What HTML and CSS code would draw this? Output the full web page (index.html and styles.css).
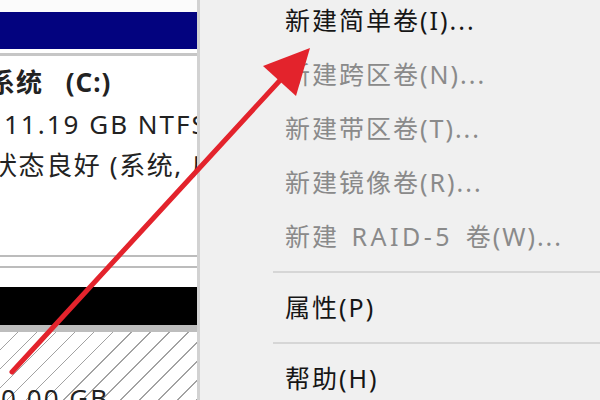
FILE: index.html
```html
<!DOCTYPE html>
<html lang="zh-CN">
<head>
<meta charset="utf-8">
<title>磁盘管理</title>
<link rel="stylesheet" href="styles.css">
</head>
<body>
<div class="screen">
  <div class="disk-panel">
    <div class="top-strip"></div>
    <div class="title-bar"></div>
    <div class="gap"></div>
    <div class="rule"></div>
    <div class="volume-info">
      <div class="vol-line vol-name">系统 (C:)</div>
      <div class="vol-line vol-size">11.19 GB NTFS</div>
      <div class="vol-line vol-state">状态良好 (系统, 启动)</div>
    </div>
    <div class="rule thin"></div>
    <div class="gap small"></div>
    <div class="rule thin"></div>
    <div class="gap mid"></div>
    <div class="black-bar"></div>
    <div class="gray-band"></div>
    <div class="hatch">
      <div class="hatch-text">0.00 GB</div>
    </div>
  </div>
  <div class="menu">
    <ul class="menu-list">
      <li class="item">新建简单卷(I)...</li>
      <li class="item disabled">新建跨区卷(N)...</li>
      <li class="item disabled">新建带区卷(T)...</li>
      <li class="item disabled">新建镜像卷(R)...</li>
      <li class="item disabled">新建 <span class="latin">RAID-5</span> 卷(W)...</li>
      <li class="sep"></li>
      <li class="item">属性(P)</li>
      <li class="sep"></li>
      <li class="item">帮助(H)</li>
    </ul>
  </div>
  <svg class="arrow" width="600" height="400" viewBox="0 0 600 400">
    <line x1="12" y1="372" x2="284" y2="76" stroke="#e3232c" stroke-width="5" stroke-linecap="round"/>
    <polygon points="310,48 263,66 296,96" fill="#e3232c"/>
  </svg>
</div>
</body>
</html>
```

FILE: styles.css
```css
html, body {
  margin: 0;
  padding: 0;
}
body {
  width: 600px;
  height: 400px;
  overflow: hidden;
  font-family: "Noto Sans", "Noto Sans CJK SC", sans-serif;
}
.screen {
  position: relative;
  width: 600px;
  height: 400px;
  display: flex;
  overflow: hidden;
  background: #f0f0f0;
}
.disk-panel {
  width: 197px;
  flex: none;
  background: #ffffff;
  border-right: 3px solid #d2d2d2;
  display: flex;
  flex-direction: column;
  overflow: hidden;
}
.disk-panel > div {
  flex-shrink: 0;
}
.top-strip {
  height: 12px;
  background: #fbfbfb;
}
.title-bar {
  height: 37px;
  background: #03037f;
}
.gap {
  height: 4px;
}
.gap.small {
  height: 9px;
}
.gap.mid {
  height: 19px;
}
.rule {
  height: 3px;
  background: #c6c6c6;
}
.rule.thin {
  height: 2px;
  background: #bcbcbc;
}
.volume-info {
  height: 199px;
  padding-top: 6px;
  box-sizing: border-box;
  color: #222222;
  font-size: 26px;
  letter-spacing: 2px;
}
.vol-line {
  height: 41.5px;
  line-height: 41.5px;
  white-space: nowrap;
}
.vol-name {
  font-weight: bold;
  margin-left: -11px;
  letter-spacing: 1px;
  word-spacing: 15px;
}
.vol-size {
  margin-left: 4px;
}
.vol-state {
  margin-left: -9px;
  letter-spacing: 1.6px;
}
.black-bar {
  height: 38px;
  background: #000000;
}
.gray-band {
  height: 7px;
  background: #bdbdbd;
}
.disk-panel > .hatch {
  flex: 1 1 auto;
  min-height: 0;
  overflow: hidden;
  background: repeating-linear-gradient(135deg, #ffffff 0 12.2px, #a2a2a2 12.2px 13.4px);
}
.hatch-text {
  padding-top: 51px;
  padding-left: 1px;
  font-size: 26px;
  letter-spacing: 2px;
  color: #222222;
  line-height: 30px;
  white-space: nowrap;
}
.menu {
  flex: 1;
  background: #f0f0f0;
}
.menu-list {
  list-style: none;
  margin: -7px 0 0 0;
  padding: 0;
}
.item {
  height: 54px;
  line-height: 54px;
  padding-left: 85px;
  font-size: 25px;
  letter-spacing: 2px;
  word-spacing: 4px;
  color: #161616;
  white-space: nowrap;
}
.item .latin {
  letter-spacing: 3.5px;
}
.item.disabled {
  color: #8a8a8a;
}
.sep {
  height: 17px;
  margin-left: 73px;
  display: flex;
  align-items: center;
}
.sep::before {
  content: "";
  display: block;
  width: 100%;
  height: 2px;
  background: #d6d6d6;
}
.arrow {
  position: absolute;
  left: 0;
  top: 0;
  pointer-events: none;
}
```
